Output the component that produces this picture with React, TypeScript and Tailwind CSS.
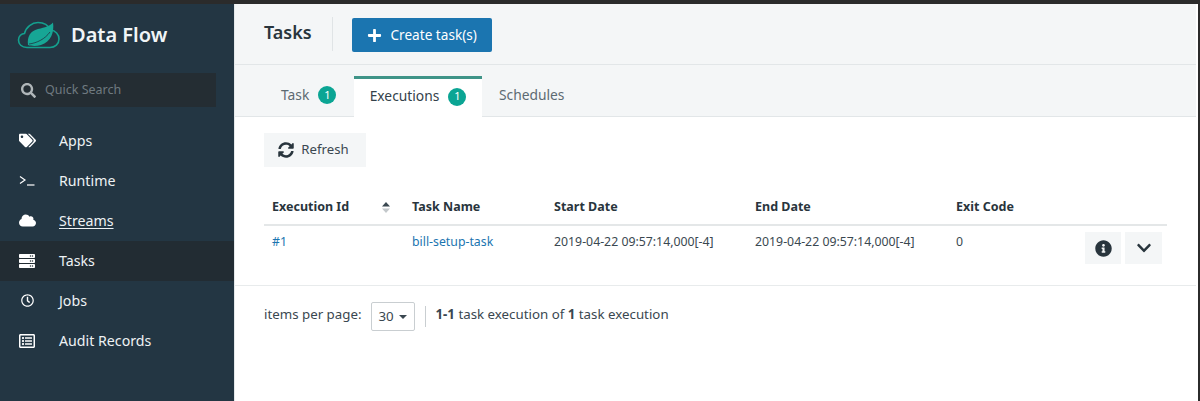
import { FaChevronDown, FaCloud, FaInfoCircle, FaPlus, FaRegClock, FaRegListAlt, FaSearch, FaServer, FaSyncAlt, FaTags } from "react-icons/fa";
import type { ReactNode } from "react";

const font = { fontFamily: '"Noto Sans", sans-serif' };

function Logo() {
  return (
    <svg width="44" height="30" viewBox="0 0 44 30" fill="none">
      <path d="M10 27.5C4.5 27.5 1.5 24 1.5 20C1.5 16 4.5 13.5 7.5 13.5C9 7 15 2.5 21 2.5C27 2.5 31.5 5.5 33.5 10C38.5 10.5 42 14.5 42 19C42 24 38 27.5 33 27.5Z" stroke="#14a08e" strokeWidth="1.6" />
      <path d="M11 25C10 17 13 11 21 9C28 7.5 33 6 36 2.5C37.5 12 34 22 24 25C19 26.5 14 26 11 25Z" fill="#17a695" />
      <path d="M12 24C20 23 28 19 33 12" stroke="#1f3542" strokeWidth="0.8" />
    </svg>
  );
}

function Prompt() {
  return (
    <svg width="16" height="10" viewBox="0 0 16 10" fill="none" stroke="#fff" strokeWidth="1.2">
      <path d="M1 0.5L6 4L1 7.5" />
      <path d="M8 9H15.5" />
    </svg>
  );
}

function NavItem({ icon, label, active, underline }: { icon: ReactNode; label: string; active?: boolean; underline?: boolean }) {
  return (
    <div className={`flex h-10 items-center pb-px pl-[19px] text-[14.2px] text-[#eef2f4] ${active ? "bg-[#222c33]" : ""}`}>
      <span className="flex w-10 justify-start text-[17px] text-white">{icon}</span>
      <span className={underline ? "underline underline-offset-2" : ""}>{label}</span>
    </div>
  );
}

function Badge() {
  return <span className="flex h-[18px] w-[18px] items-center justify-center rounded-full bg-[#0ba594] text-[11px] text-white">1</span>;
}

function Cell({ w, children, className = "" }: { w: string; children: ReactNode; className?: string }) {
  return <div className={`${w} shrink-0 ${className}`}>{children}</div>;
}

export default function App() {
  return (
    <div className="flex h-[401px] w-[1200px] flex-col overflow-hidden bg-white" style={font}>
      <div className="h-[4px] bg-[#2b2b2b]" />
      <div className="flex min-h-0 flex-1">
        <aside className="w-[234px] shrink-0 bg-[#233643]">
          <div className="flex h-[61px] items-center pl-[17px]">
            <Logo />
            <span className="ml-[10px] text-[20px] font-semibold text-[#f1f5f7]">Data Flow</span>
          </div>
          <div className="ml-[10px] mt-[8px] flex h-[34px] w-[206px] items-center bg-[#242d33] pl-[11px] text-[12.5px] text-[#6f7a80]">
            <FaSearch className="mr-[9px] text-[15px] text-[#b0b6b9]" />
            Quick Search
          </div>
          <div className="mt-[14px]">
            <NavItem icon={<FaTags />} label="Apps" />
            <NavItem icon={<Prompt />} label="Runtime" />
            <NavItem icon={<FaCloud />} label="Streams" underline />
            <NavItem icon={<FaServer className="text-[16px]" />} label="Tasks" active />
            <NavItem icon={<FaRegClock className="ml-[2px] text-[13px]" />} label="Jobs" />
            <NavItem icon={<FaRegListAlt className="text-[16px]" />} label="Audit Records" />
          </div>
        </aside>
        <main className="min-w-0 flex-1 border-l border-[#e4e8ea] pr-[2px] text-[13px] text-[#3a4750]">
          <header className="flex h-[61px] items-center border-b border-[#e2e6e8] bg-[#f4f6f7] pl-[29px]">
            <h1 className="-mt-[3px] text-[18px] font-semibold text-[#29353d]">Tasks</h1>
            <div className="ml-[20px] h-[34px] w-px bg-[#e0e4e6]" />
            <button className="ml-[19px] mt-[2px] flex h-[34px] w-[140px] items-center justify-center rounded-[2px] bg-[#1b75b0] text-[13.6px] text-white">
              <FaPlus className="mr-[9px] text-[15px]" />
              Create task(s)
            </button>
          </header>
          <nav className="flex h-[52px] items-end border-b border-[#e2e6e8] bg-[#f4f6f7] pl-[46px] text-[13.8px]">
            <div className="-mb-px flex h-[41px] w-[73px] items-center gap-[9px] pb-[3px] text-[#5d6a72]">
              Task <Badge />
            </div>
            <div className="-mb-px flex h-[41px] w-[128px] items-center justify-center gap-[9px] border-t-[3px] border-[#3f9488] bg-white pb-[3px] text-[#33414a]">
              Executions <Badge />
            </div>
            <div className="-mb-px flex h-[41px] items-center pb-[3px] pl-[17px] text-[#5d6a72]">Schedules</div>
          </nav>
          <div className="pl-[29px] pt-[16px]">
            <button className="flex h-[34px] w-[102px] items-center justify-center gap-[7px] bg-[#f4f6f7] pr-[3px] text-[13.2px] text-[#3a4750]">
              <FaSyncAlt className="text-[16px] text-[#29353d]" />
              Refresh
            </button>
          </div>
          <div className="ml-[29px] mr-[29px] mt-[24px]">
            <div className="flex h-[35px] items-center border-b-2 border-[#e4e7e8] pl-[8px] text-[12.5px] font-bold text-[#29353d]">
              <Cell w="w-[140px]" className="flex items-center justify-between pr-[22px]">
                Execution Id
                <svg width="8" height="11" viewBox="0 0 8 11"><path d="M4 0L8 4.5H0Z" fill="#3a4750" /><path d="M4 11L8 6.5H0Z" fill="#c3c8cb" /></svg>
              </Cell>
              <Cell w="w-[142px]">Task Name</Cell>
              <Cell w="w-[201px]">Start Date</Cell>
              <Cell w="w-[201px]">End Date</Cell>
              <Cell w="w-[120px]">Exit Code</Cell>
            </div>
            <div className="flex h-[44px] items-start pl-[8px] pt-[7px] text-[12.3px]">
              <Cell w="w-[140px]"><a className="text-[#1b75b0]">#1</a></Cell>
              <Cell w="w-[142px]"><a className="text-[#1b75b0]">bill-setup-task</a></Cell>
              <Cell w="w-[201px]">2019-04-22 09:57:14,000[-4]</Cell>
              <Cell w="w-[201px]">2019-04-22 09:57:14,000[-4]</Cell>
              <Cell w="w-[129px]">0</Cell>
              <div className="-mt-px flex gap-[4px]">
                <button className="flex h-[32px] w-[36px] items-center justify-center bg-[#f4f6f7] text-[17px] text-[#29353d]"><FaInfoCircle /></button>
                <button className="flex h-[32px] w-[37px] items-center justify-center bg-[#f4f6f7] text-[16px] text-[#29353d]"><FaChevronDown /></button>
              </div>
            </div>
          </div>
          <div className="mt-[15px] flex items-center border-t border-[#e8ebec] pl-[29px] pt-[14px] text-[13.3px]">
            <span>items per page:</span>
            <div className="ml-[9px] flex h-[29px] w-[44px] translate-y-[2px] items-center justify-center gap-[5px] rounded-[2px] border border-[#c9ced1]">
              30
              <svg width="8" height="4" viewBox="0 0 8 4"><path d="M0 0H8L4 4Z" fill="#3a4750" /></svg>
            </div>
            <div className="ml-[10px] h-[21px] w-px translate-y-[2px] bg-[#c9ced1]" />
            <span className="ml-[10px]"><b>1-1</b> task execution of <b>1</b> task execution</span>
          </div>
        </main>
        <div className="w-[2px] shrink-0 bg-[#2b2b2b]" />
      </div>
    </div>
  );
}
